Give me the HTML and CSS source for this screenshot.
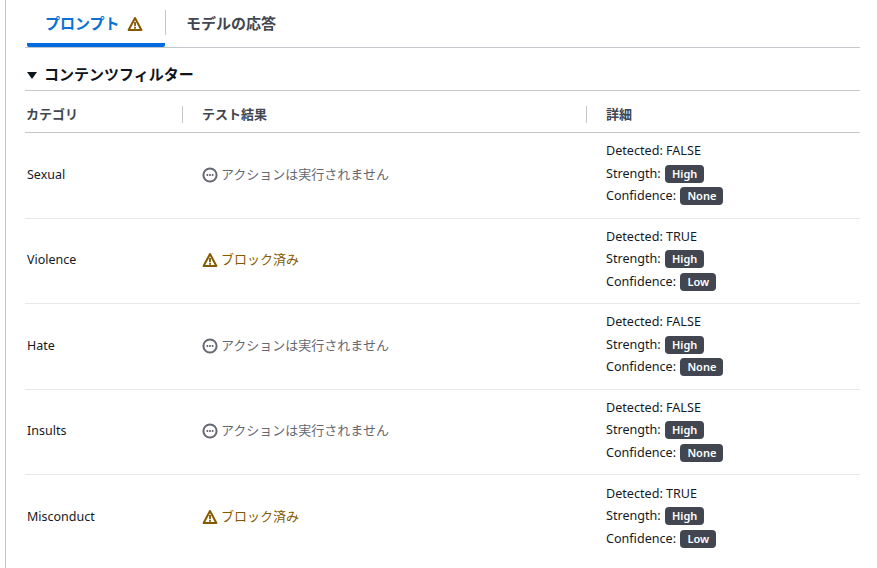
FILE: index.html
```html
<!DOCTYPE html>
<html lang="ja">
<head>
<meta charset="utf-8">
<title>コンテンツフィルター</title>
<link rel="stylesheet" href="styles.css">
</head>
<body>
<svg class="defs" width="0" height="0" aria-hidden="true">
  <symbol id="warn" viewBox="0 0 16 16"><path d="M8 2 1.6 14h12.8L8 2Z" fill="none" stroke="currentColor" stroke-width="2" stroke-linejoin="round"/><path d="M8 6v4.2M8 11v1.8" fill="none" stroke="currentColor" stroke-width="1.8"/></symbol>
  <symbol id="dots" viewBox="0 0 16 16"><circle cx="8" cy="8" r="6.6" fill="none" stroke="currentColor" stroke-width="2"/><path d="M4.6 8h1.6M7.2 8h1.6M9.8 8h1.6" fill="none" stroke="currentColor" stroke-width="1.8"/></symbol>
</svg>
<main class="panel">
  <nav class="tabs">
    <div class="tab tab-active"><span>プロンプト</span><svg class="icon warn"><use href="#warn"/></svg></div>
    <div class="tab-sep"></div>
    <div class="tab"><span>モデルの応答</span></div>
  </nav>
  <h2 class="section"><span class="caret"></span>コンテンツフィルター</h2>
  <div class="thead">
    <div class="th th-cat">カテゴリ</div>
    <div class="th th-res">テスト結果</div>
    <div class="th th-det">詳細</div>
  </div>
  <div class="row">
    <div class="cat">Sexual</div>
    <div class="res none"><svg class="icon"><use href="#dots"/></svg>アクションは実行されません</div>
    <div class="det"><div>Detected: FALSE</div><div>Strength: <span class="badge">High</span></div><div>Confidence: <span class="badge">None</span></div></div>
  </div>
  <div class="row">
    <div class="cat">Violence</div>
    <div class="res blocked"><svg class="icon"><use href="#warn"/></svg>ブロック済み</div>
    <div class="det"><div>Detected: TRUE</div><div>Strength: <span class="badge">High</span></div><div>Confidence: <span class="badge">Low</span></div></div>
  </div>
  <div class="row">
    <div class="cat">Hate</div>
    <div class="res none"><svg class="icon"><use href="#dots"/></svg>アクションは実行されません</div>
    <div class="det"><div>Detected: FALSE</div><div>Strength: <span class="badge">High</span></div><div>Confidence: <span class="badge">None</span></div></div>
  </div>
  <div class="row">
    <div class="cat">Insults</div>
    <div class="res none"><svg class="icon"><use href="#dots"/></svg>アクションは実行されません</div>
    <div class="det"><div>Detected: FALSE</div><div>Strength: <span class="badge">High</span></div><div>Confidence: <span class="badge">None</span></div></div>
  </div>
  <div class="row row-last">
    <div class="cat">Misconduct</div>
    <div class="res blocked"><svg class="icon"><use href="#warn"/></svg>ブロック済み</div>
    <div class="det"><div>Detected: TRUE</div><div>Strength: <span class="badge">High</span></div><div>Confidence: <span class="badge">Low</span></div></div>
  </div>
</main>
</body>
</html>
```
FILE: styles.css
```css
* { box-sizing: border-box; }
html, body { margin: 0; height: 100%; overflow: hidden; background: #fff; }
body {
  font-family: "Liberation Sans", "Noto Sans CJK JP", sans-serif;
  font-size: 13px;
  line-height: 20px;
  color: #16191f;
}
.defs { position: absolute; }
.panel {
  margin-left: 5px;
  height: 568px;
  width: 855px;
  padding-left: 19px;
  border-left: 1px solid #c6c6cd;
}
.tabs {
  display: flex;
  align-items: center;
  height: 48px;
  border-bottom: 1px solid #c6c6cd;
}
.tab {
  display: flex;
  align-items: center;
  gap: 7px;
  height: 47px;
  padding: 0 21px 0 20px;
  font-size: 15px;
  font-weight: 700;
  color: #424650;
}
.tab-active {
  width: 138px;
  margin-left: 2px;
  color: #0972d3;
  border-bottom: 4px solid #006ce0;
  padding-top: 4px;
  padding-left: 18px;
  padding-right: 0;
  border-radius: 2px;
}
.tab-sep { width: 1px; height: 25px; margin-bottom: 2px; background: #c6c6cd; }
.icon { width: 16px; height: 16px; flex: none; }
.warn { color: #855900; }
.section {
  display: flex;
  align-items: center;
  gap: 7px;
  height: 43px;
  margin: 0;
  padding: 12px 0 0 2px;
  font-size: 15px;
  line-height: 20px;
  font-weight: 700;
  color: #0f141a;
  border-bottom: 1px solid #c6c6cd;
}
.caret {
  width: 0;
  height: 0;
  border-left: 5px solid transparent;
  border-right: 5px solid transparent;
  border-top: 7px solid #0f141a;
  margin-top: 1px;
}
.thead {
  display: grid;
  grid-template-columns: 157px 404px 1fr;
  height: 42px;
  padding-top: 5px;
  align-items: center;
  border-bottom: 1px solid #c6c6cd;
}
.th {
  font-size: 13px;
  font-weight: 700;
  color: #424650;
  height: 17px;
  line-height: 17px;
  display: flex;
  align-items: center;
  padding-left: 1px;
}
.th-res, .th-det { border-left: 1px solid #c6c6cd; padding-left: 19px; }
.row {
  display: grid;
  grid-template-columns: 156px 404px 1fr;
  align-items: center;
  height: 85.5px;
  padding-bottom: 1px;
  border-bottom: 1px solid #e8e8ea;
}
.row-last { border-bottom: 0; }
.cat, .det, .badge { font-family: "Noto Sans", "Noto Sans CJK JP", sans-serif; }
.cat { padding-left: 2px; font-size: 12.5px; }
.res { display: flex; align-items: center; gap: 3px; padding-left: 21px; font-size: 13px; }
.none { color: #656871; }
.blocked { color: #855900; }
.det { padding-left: 21px; font-size: 12.6px; line-height: 22.5px; position: relative; top: -1px; }
.badge {
  display: inline-block;
  height: 18px;
  line-height: 18px;
  padding: 0 7px;
  margin-left: 1px;
  border-radius: 4px;
  background: #424650;
  color: #fff;
  font-size: 11px;
  font-weight: 600;
  vertical-align: 0;
}
```
